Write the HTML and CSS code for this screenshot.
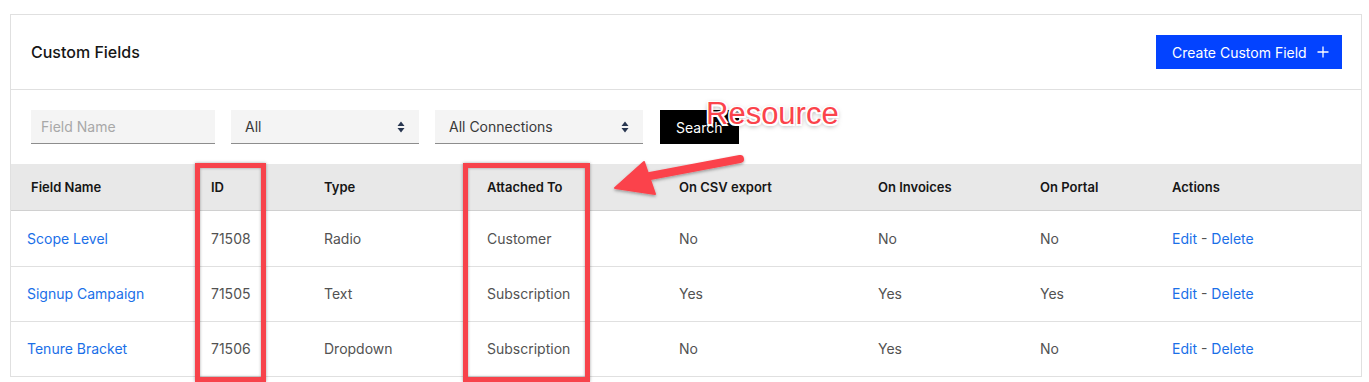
FILE: index.html
```html
<!DOCTYPE html>
<html>
<head>
<meta charset="utf-8">
<link rel="stylesheet" href="styles.css">
</head>
<body>
<div class="card">
  <div class="card-head">
    <h1 class="title">Custom Fields</h1>
    <button class="btn-primary">Create Custom Field
      <svg class="plus" width="12" height="12" viewBox="0 0 12 12"><path d="M6 0.5V11.5M0.5 6H11.5" stroke="#fff" stroke-width="1.3" fill="none"/></svg>
    </button>
  </div>
  <div class="filters">
    <div class="field input w184"><span class="ph">Field Name</span></div>
    <div class="field select w188"><span>All</span>
      <svg class="updown" width="8" height="12" viewBox="0 0 8 12"><path d="M4 0.5L7.5 5H0.5Z M4 11.5L7.5 7H0.5Z" fill="#283650"/></svg>
    </div>
    <div class="field select w208"><span>All Connections</span>
      <svg class="updown" width="8" height="12" viewBox="0 0 8 12"><path d="M4 0.5L7.5 5H0.5Z M4 11.5L7.5 7H0.5Z" fill="#283650"/></svg>
    </div>
    <button class="btn-search">Search</button>
  </div>
  <table class="grid">
    <colgroup>
      <col class="c1"><col class="c2"><col class="c3"><col class="c4"><col class="c5"><col class="c6"><col class="c7"><col>
    </colgroup>
    <thead>
      <tr><th class="first">Field Name</th><th>ID</th><th>Type</th><th>Attached To</th><th>On CSV export</th><th>On Invoices</th><th>On Portal</th><th>Actions</th></tr>
    </thead>
    <tbody>
      <tr class="row-first"><td class="first"><a>Scope Level</a></td><td>71508</td><td>Radio</td><td>Customer</td><td>No</td><td>No</td><td>No</td><td><a>Edit</a> - <a>Delete</a></td></tr>
      <tr><td class="first"><a>Signup Campaign</a></td><td>71505</td><td>Text</td><td>Subscription</td><td>Yes</td><td>Yes</td><td>Yes</td><td><a>Edit</a> - <a>Delete</a></td></tr>
      <tr><td class="first"><a>Tenure Bracket</a></td><td>71506</td><td>Dropdown</td><td>Subscription</td><td>No</td><td>Yes</td><td>No</td><td><a>Edit</a> - <a>Delete</a></td></tr>
    </tbody>
  </table>
</div>

<div class="mark mark-id"></div>
<div class="mark mark-att"></div>
<svg class="arrow" width="160" height="60" viewBox="0 0 160 60">
  <defs>
    <filter id="sh" x="-20%" y="-40%" width="140%" height="180%">
      <feDropShadow dx="0" dy="1.5" stdDeviation="1.5" flood-color="#000" flood-opacity="0.35"/>
    </filter>
  </defs>
  <g filter="url(#sh)">
    <path d="M136 7 L46 24" stroke="#fb434b" stroke-width="8" stroke-linecap="round" fill="none"/>
    <path d="M11 36 L40 10 L51 42 Z" fill="#fb434b" stroke="#fb434b" stroke-width="2" stroke-linejoin="round"/>
  </g>
</svg>
<div class="label">Resource</div>
</body>
</html>
```
FILE: styles.css
```css
* { box-sizing: border-box; }
body {
  margin: 0;
  background: #fff;
  font-family: Inter, "Noto Sans", Arial, sans-serif;
  color: #161616;
}
.card {
  margin: 14px 0 0 10px;
  width: 1352px;
  border: 1px solid #e0e0e0;
  border-bottom: none;
  background: #fff;
}
.card-head {
  height: 75px;
  display: flex;
  align-items: center;
  justify-content: space-between;
  padding: 0 19px 0 20px;
  border-bottom: 1px solid #e0e0e0;
}
.title {
  margin: 0;
  font-size: 16px;
  font-weight: 500;
  color: #161616;
}
.btn-primary {
  height: 34px;
  width: 186px;
  background: #0343ff;
  color: #fff;
  border: none;
  font-family: inherit;
  font-size: 14px;
  display: flex;
  align-items: center;
  padding: 0 0 0 16px;
  gap: 10px;
}
.plus { flex: none; }
.filters {
  display: flex;
  gap: 16px;
  padding: 20px 20px 20px 20px;
  align-items: flex-start;
}
.field {
  height: 34px;
  background: #f4f4f4;
  border-bottom: 1px solid #8d8d8d;
  display: flex;
  align-items: center;
  font-size: 14px;
  color: #393939;
}
.input { padding-left: 10px; }
.ph { color: #a8a8a8; }
.select { padding: 0 14px 0 14px; justify-content: space-between; }
.w184 { width: 184px; }
.w188 { width: 188px; }
.w208 { width: 208px; }
.btn-search {
  height: 34px;
  width: 79px;
  margin-left: 1px;
  background: #000;
  color: #fff;
  border: none;
  font-family: inherit;
  font-size: 14px;
  text-align: left;
  padding-left: 16px;
}
.grid {
  width: 100%;
  border-collapse: collapse;
  table-layout: fixed;
}
.c1 { width: 184px; }
.c2 { width: 113px; }
.c3 { width: 163px; }
.c4 { width: 192px; }
.c5 { width: 199px; }
.c6 { width: 162px; }
.c7 { width: 132px; }
.grid th {
  background: #e8e8e8;
  height: 46px;
  text-align: left;
  font-size: 13px;
  font-weight: 600;
  color: #161616;
  padding: 0 0 0 16px;
  border-bottom: 1px solid #d0d0d0;
}
.grid th.first { padding-left: 20px; }
.grid td {
  height: 55px;
  font-size: 14px;
  color: #525252;
  padding: 0 0 0 16px;
  border-bottom: 1px solid #e0e0e0;
}
.grid .row-first td { height: 56px; }
.grid td.first { padding-left: 16px; }
.grid a { color: #1a6fe8; }

.mark {
  position: absolute;
  top: 163px;
  height: 219px;
  border: 5px solid #f7434b;
  box-shadow: 0 0 3px rgba(0,0,0,0.35), inset 0 0 3px rgba(0,0,0,0.35);
}
.mark-id { left: 195px; width: 71px; }
.mark-att { left: 463px; width: 127px; }
.arrow {
  position: absolute;
  left: 604px;
  top: 152px;
}
.label {
  position: absolute;
  left: 706px;
  top: 96px;
  font-family: "Liberation Sans", Arial, sans-serif;
  font-size: 31px;
  color: #fb434b;
  text-shadow: -1.5px -1.5px 0 #fff, 1.5px -1.5px 0 #fff, -1.5px 1.5px 0 #fff, 1.5px 1.5px 0 #fff, 0 0 2px #fff, 0 2px 5px rgba(0,0,0,0.5);
}
```
